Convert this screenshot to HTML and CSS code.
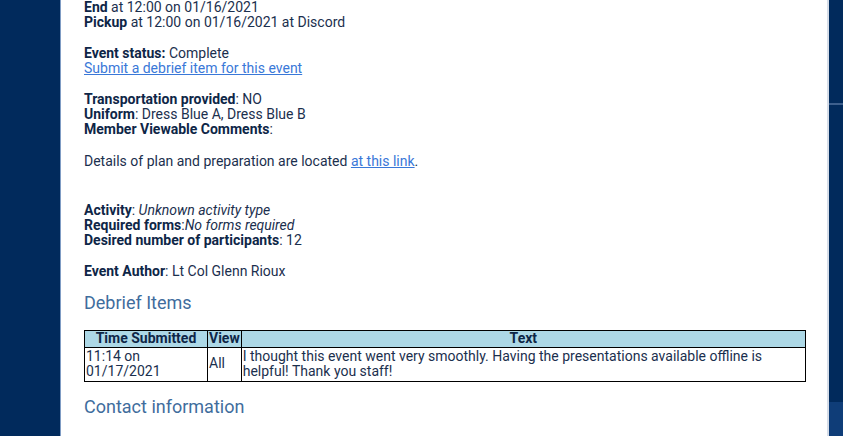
FILE: index.html
```html
<!DOCTYPE html>
<html>
<head>
<meta charset="utf-8">
<link rel="stylesheet" href="styles.css">
</head>
<body>
<div class="page">
  <main class="panel">
    <div class="info">
      <b>End</b> at 12:00 on 01/16/2021<br>
      <b>Pickup</b> at 12:00 on 01/16/2021 at Discord<br>
      <br>
      <b>Event status:</b> Complete<br>
      <a href="#">Submit a debrief item for this event</a><br>
      <br>
      <b>Transportation provided</b>: NO<br>
      <b>Uniform</b>: Dress Blue A, Dress Blue B<br>
      <b>Member Viewable Comments</b>:
    </div>
    <p class="info details">Details of plan and preparation are located <a href="#">at this link</a>.</p>
    <div class="info">
      <b>Activity</b>: <i>Unknown activity type</i><br>
      <b>Required forms</b>:<i>No forms required</i><br>
      <b>Desired number of participants</b>: 12<br>
      <br>
      <b>Event Author</b>: Lt Col Glenn Rioux
    </div>
    <h2 class="section">Debrief Items</h2>
    <table class="debrief">
      <tr>
        <th class="c-time">Time Submitted</th>
        <th class="c-view">View</th>
        <th>Text</th>
      </tr>
      <tr>
        <td>11:14 on 01/17/2021</td>
        <td>All</td>
        <td>I thought this event went very smoothly. Having the presentations available offline is helpful! Thank you staff!</td>
      </tr>
    </table>
    <h2 class="section contact">Contact information</h2>
    <div class="info">
      <b>CAP Point of Contact</b>: Lt Col Glenn Rioux
    </div>
  </main>
  <aside class="rail">
    <div class="rail-top"></div>
    <div class="rail-mid"></div>
    <div class="rail-bottom"></div>
  </aside>
</div>
</body>
</html>
```
FILE: styles.css
```css
html, body {
  margin: 0;
  padding: 0;
  height: 100%;
  overflow: hidden;
}
body {
  background: #012a5c;
  font-family: Roboto, "Liberation Sans", sans-serif;
  font-size: 14px;
  color: #1b2f4e;
}
.page {
  display: flex;
  height: 436px;
}
.panel {
  flex: none;
  box-sizing: border-box;
  margin-left: 60px;
  width: 769px;
  padding: 0 21px 0 23px;
  background: #fff;
  border-left: 1px solid #7f9cc4;
  border-right: 2px solid #d6dde8;
}
.info {
  line-height: 15.25px;
}
.info b {
  color: #0e2647;
}
.details {
  margin: 17px 0 33px;
}
a {
  color: #3a78d8;
}
.section {
  margin: 13px 0 16px;
  font-size: 18px;
  font-weight: normal;
  color: #3f6d9d;
  line-height: 22px;
}
.section.contact {
  margin-top: 14px;
  margin-bottom: 19px;
}
.debrief {
  width: 722px;
  border-collapse: collapse;
}
.debrief th, .debrief td {
  border: 1px solid #000;
  padding: 0 1px;
  line-height: 15px;
}
.debrief th {
  background: #add8e6;
  color: #0e2647;
  height: 16px;
}
.debrief td {
  color: #1b2f4e;
  padding-top: 1px;
  padding-bottom: 2px;
}
.c-time { width: 120px; }
.c-view { width: 30px; }
.rail {
  flex: 1;
  display: flex;
  flex-direction: column;
}
.rail-top {
  height: 103px;
  background: #012a5c;
  border-bottom: 2px solid #3d5f8d;
}
.rail-mid {
  height: 297px;
  background: #012a5c;
}
.rail-bottom {
  flex: 1;
  background: #0f3d78;
}
```
